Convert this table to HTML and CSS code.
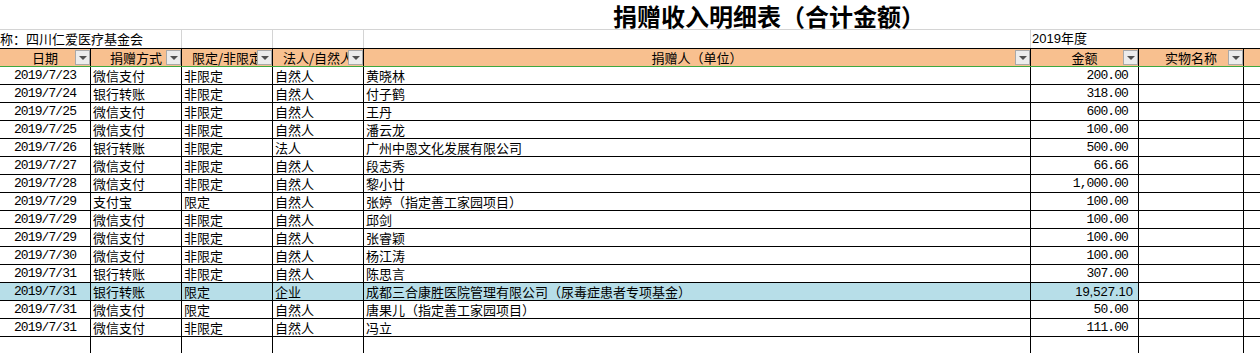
FILE: index.html
```html
<!DOCTYPE html>
<html lang="zh-CN">
<head>
  <meta charset="UTF-8" />
  <title>捐赠收入明细表</title>
  <link rel="stylesheet" href="styles.css">
</head>
<body>
  <div class="sheet">
    <!-- Title -->
    <div class="title-row"><span class="title">捐赠收入明细表（合计金额）</span></div>

    <!-- Org / year -->
    <div class="row info-row">
      <div class="cell span2">称：四川仁爱医疗基金会</div>
      <div class="cell"></div>
      <div class="cell"></div>
      <div class="cell"></div>
      <div class="cell span3 year">2019年度</div>
    </div>

    <!-- Header -->
    <div class="row head-row">
      <div class="cell">日期<span class="filter"></span></div>
      <div class="cell">捐赠方式<span class="filter"></span></div>
      <div class="cell">限定/非限定<span class="filter"></span></div>
      <div class="cell">法人/自然人<span class="filter"></span></div>
      <div class="cell">捐赠人（单位）<span class="filter"></span></div>
      <div class="cell">金额<span class="filter"></span></div>
      <div class="cell">实物名称<span class="filter"></span></div>
      <div class="cell"></div>
    </div>

    <!-- Data -->
    <div class="row"><div class="cell date">2019/7/23</div><div class="cell">微信支付</div><div class="cell">非限定</div><div class="cell">自然人</div><div class="cell">黄晓林</div><div class="cell num">200.00</div><div class="cell"></div><div class="cell"></div></div>
    <div class="row"><div class="cell date">2019/7/24</div><div class="cell">银行转账</div><div class="cell">非限定</div><div class="cell">自然人</div><div class="cell">付子鹤</div><div class="cell num">318.00</div><div class="cell"></div><div class="cell"></div></div>
    <div class="row"><div class="cell date">2019/7/25</div><div class="cell">微信支付</div><div class="cell">非限定</div><div class="cell">自然人</div><div class="cell">王丹</div><div class="cell num">600.00</div><div class="cell"></div><div class="cell"></div></div>
    <div class="row"><div class="cell date">2019/7/25</div><div class="cell">微信支付</div><div class="cell">非限定</div><div class="cell">自然人</div><div class="cell">潘云龙</div><div class="cell num">100.00</div><div class="cell"></div><div class="cell"></div></div>
    <div class="row"><div class="cell date">2019/7/26</div><div class="cell">银行转账</div><div class="cell">非限定</div><div class="cell">法人</div><div class="cell">广州中恩文化发展有限公司</div><div class="cell num">500.00</div><div class="cell"></div><div class="cell"></div></div>
    <div class="row"><div class="cell date">2019/7/27</div><div class="cell">微信支付</div><div class="cell">非限定</div><div class="cell">自然人</div><div class="cell">段志秀</div><div class="cell num">66.66</div><div class="cell"></div><div class="cell"></div></div>
    <div class="row"><div class="cell date">2019/7/28</div><div class="cell">微信支付</div><div class="cell">非限定</div><div class="cell">自然人</div><div class="cell">黎小廿</div><div class="cell num">1,000.00</div><div class="cell"></div><div class="cell"></div></div>
    <div class="row"><div class="cell date">2019/7/29</div><div class="cell">支付宝</div><div class="cell">限定</div><div class="cell">自然人</div><div class="cell">张婷（指定善工家园项目）</div><div class="cell num">100.00</div><div class="cell"></div><div class="cell"></div></div>
    <div class="row"><div class="cell date">2019/7/29</div><div class="cell">微信支付</div><div class="cell">非限定</div><div class="cell">自然人</div><div class="cell">邱剑</div><div class="cell num">100.00</div><div class="cell"></div><div class="cell"></div></div>
    <div class="row"><div class="cell date">2019/7/29</div><div class="cell">微信支付</div><div class="cell">非限定</div><div class="cell">自然人</div><div class="cell">张睿颖</div><div class="cell num">100.00</div><div class="cell"></div><div class="cell"></div></div>
    <div class="row"><div class="cell date">2019/7/30</div><div class="cell">微信支付</div><div class="cell">非限定</div><div class="cell">自然人</div><div class="cell">杨江涛</div><div class="cell num">100.00</div><div class="cell"></div><div class="cell"></div></div>
    <div class="row"><div class="cell date">2019/7/31</div><div class="cell">银行转账</div><div class="cell">非限定</div><div class="cell">自然人</div><div class="cell">陈思言</div><div class="cell num">307.00</div><div class="cell"></div><div class="cell"></div></div>
    <div class="row selected"><div class="cell date">2019/7/31</div><div class="cell">银行转账</div><div class="cell">限定</div><div class="cell">企业</div><div class="cell">成都三合康胜医院管理有限公司（尿毒症患者专项基金）</div><div class="cell num sans">19,527.10</div><div class="cell"></div><div class="cell"></div></div>
    <div class="row"><div class="cell date">2019/7/31</div><div class="cell">微信支付</div><div class="cell">限定</div><div class="cell">自然人</div><div class="cell">唐果儿（指定善工家园项目）</div><div class="cell num">50.00</div><div class="cell"></div><div class="cell"></div></div>
    <div class="row"><div class="cell date">2019/7/31</div><div class="cell">微信支付</div><div class="cell">非限定</div><div class="cell">自然人</div><div class="cell">冯立</div><div class="cell num">111.00</div><div class="cell"></div><div class="cell"></div></div>

    <!-- Empty row -->
    <div class="row empty-row"><div class="cell"></div><div class="cell"></div><div class="cell"></div><div class="cell"></div><div class="cell"></div><div class="cell"></div><div class="cell"></div><div class="cell"></div></div>
  </div>
</body>
</html>
```

FILE: styles.css
```css
body {
  margin: 0;
  padding: 0;
  background: #fff;
  color: #000;
  font-family: "Noto Sans CJK SC", "Noto Sans", sans-serif;
  font-size: 13px;
  overflow: hidden;
}

.sheet {
  width: 1260px;
}

.title-row {
  height: 30px;
  box-sizing: border-box;
  border-bottom: 1px solid #d4d4d4;
  padding: 3px 0 0 613px;
  white-space: nowrap;
}

.title {
  display: inline-block;
  font-size: 24px;
  font-weight: bold;
  line-height: 26px;
}

.row {
  display: grid;
  grid-template-columns: 91px 91px 91px 91px 667px 108px 105px 16px;
  height: 18px;
}

.cell {
  box-sizing: border-box;
  border-right: 1px solid #000;
  border-bottom: 1px solid #000;
  padding: 0 2px;
  line-height: 17px;
  white-space: nowrap;
  overflow: hidden;
  position: relative;
}

.row .cell:last-child {
  border-right: none;
}

/* org / year row */
.info-row .cell {
  border-bottom: none;
  border-right-color: #d4d4d4;
  padding-left: 0;
}

.span2 {
  grid-column: span 2;
}

.span3 {
  grid-column: span 3;
}

.info-row .year {
  font-family: "Liberation Sans", "Noto Sans CJK SC", sans-serif;
  padding-left: 1px;
}

/* header */
.head-row {
  height: 19px;
  box-sizing: border-box;
  border-top: 1px solid #000;
  border-bottom: 1px solid #3fa83f;
  background: #f8c08f;
}

.head-row .cell {
  border-bottom: none;
  text-align: center;
  padding: 0;
}

.filter {
  position: absolute;
  right: 0;
  top: 1px;
  width: 15px;
  height: 15px;
  box-sizing: border-box;
  border: 1px solid #a9a9a9;
  background: #ececec;
}

.filter::after {
  content: '';
  position: absolute;
  left: 3px;
  top: 5px;
  border-left: 4px solid transparent;
  border-right: 4px solid transparent;
  border-top: 4px solid #505050;
}

/* data */
.date,
.num {
  font-family: "Liberation Mono", monospace;
  font-size: 13px;
  letter-spacing: -0.9px;
}

.date {
  text-align: center;
}

.num {
  text-align: right;
  padding-right: 10px;
}

.num.sans {
  font-family: "Liberation Sans", sans-serif;
  letter-spacing: 0;
  padding-right: 5px;
}

.selected {
  background: #b7dee8;
}

.selected .cell:nth-last-child(-n+2) {
  background: #fff;
}

.empty-row .cell {
  border-bottom: none;
}
```
